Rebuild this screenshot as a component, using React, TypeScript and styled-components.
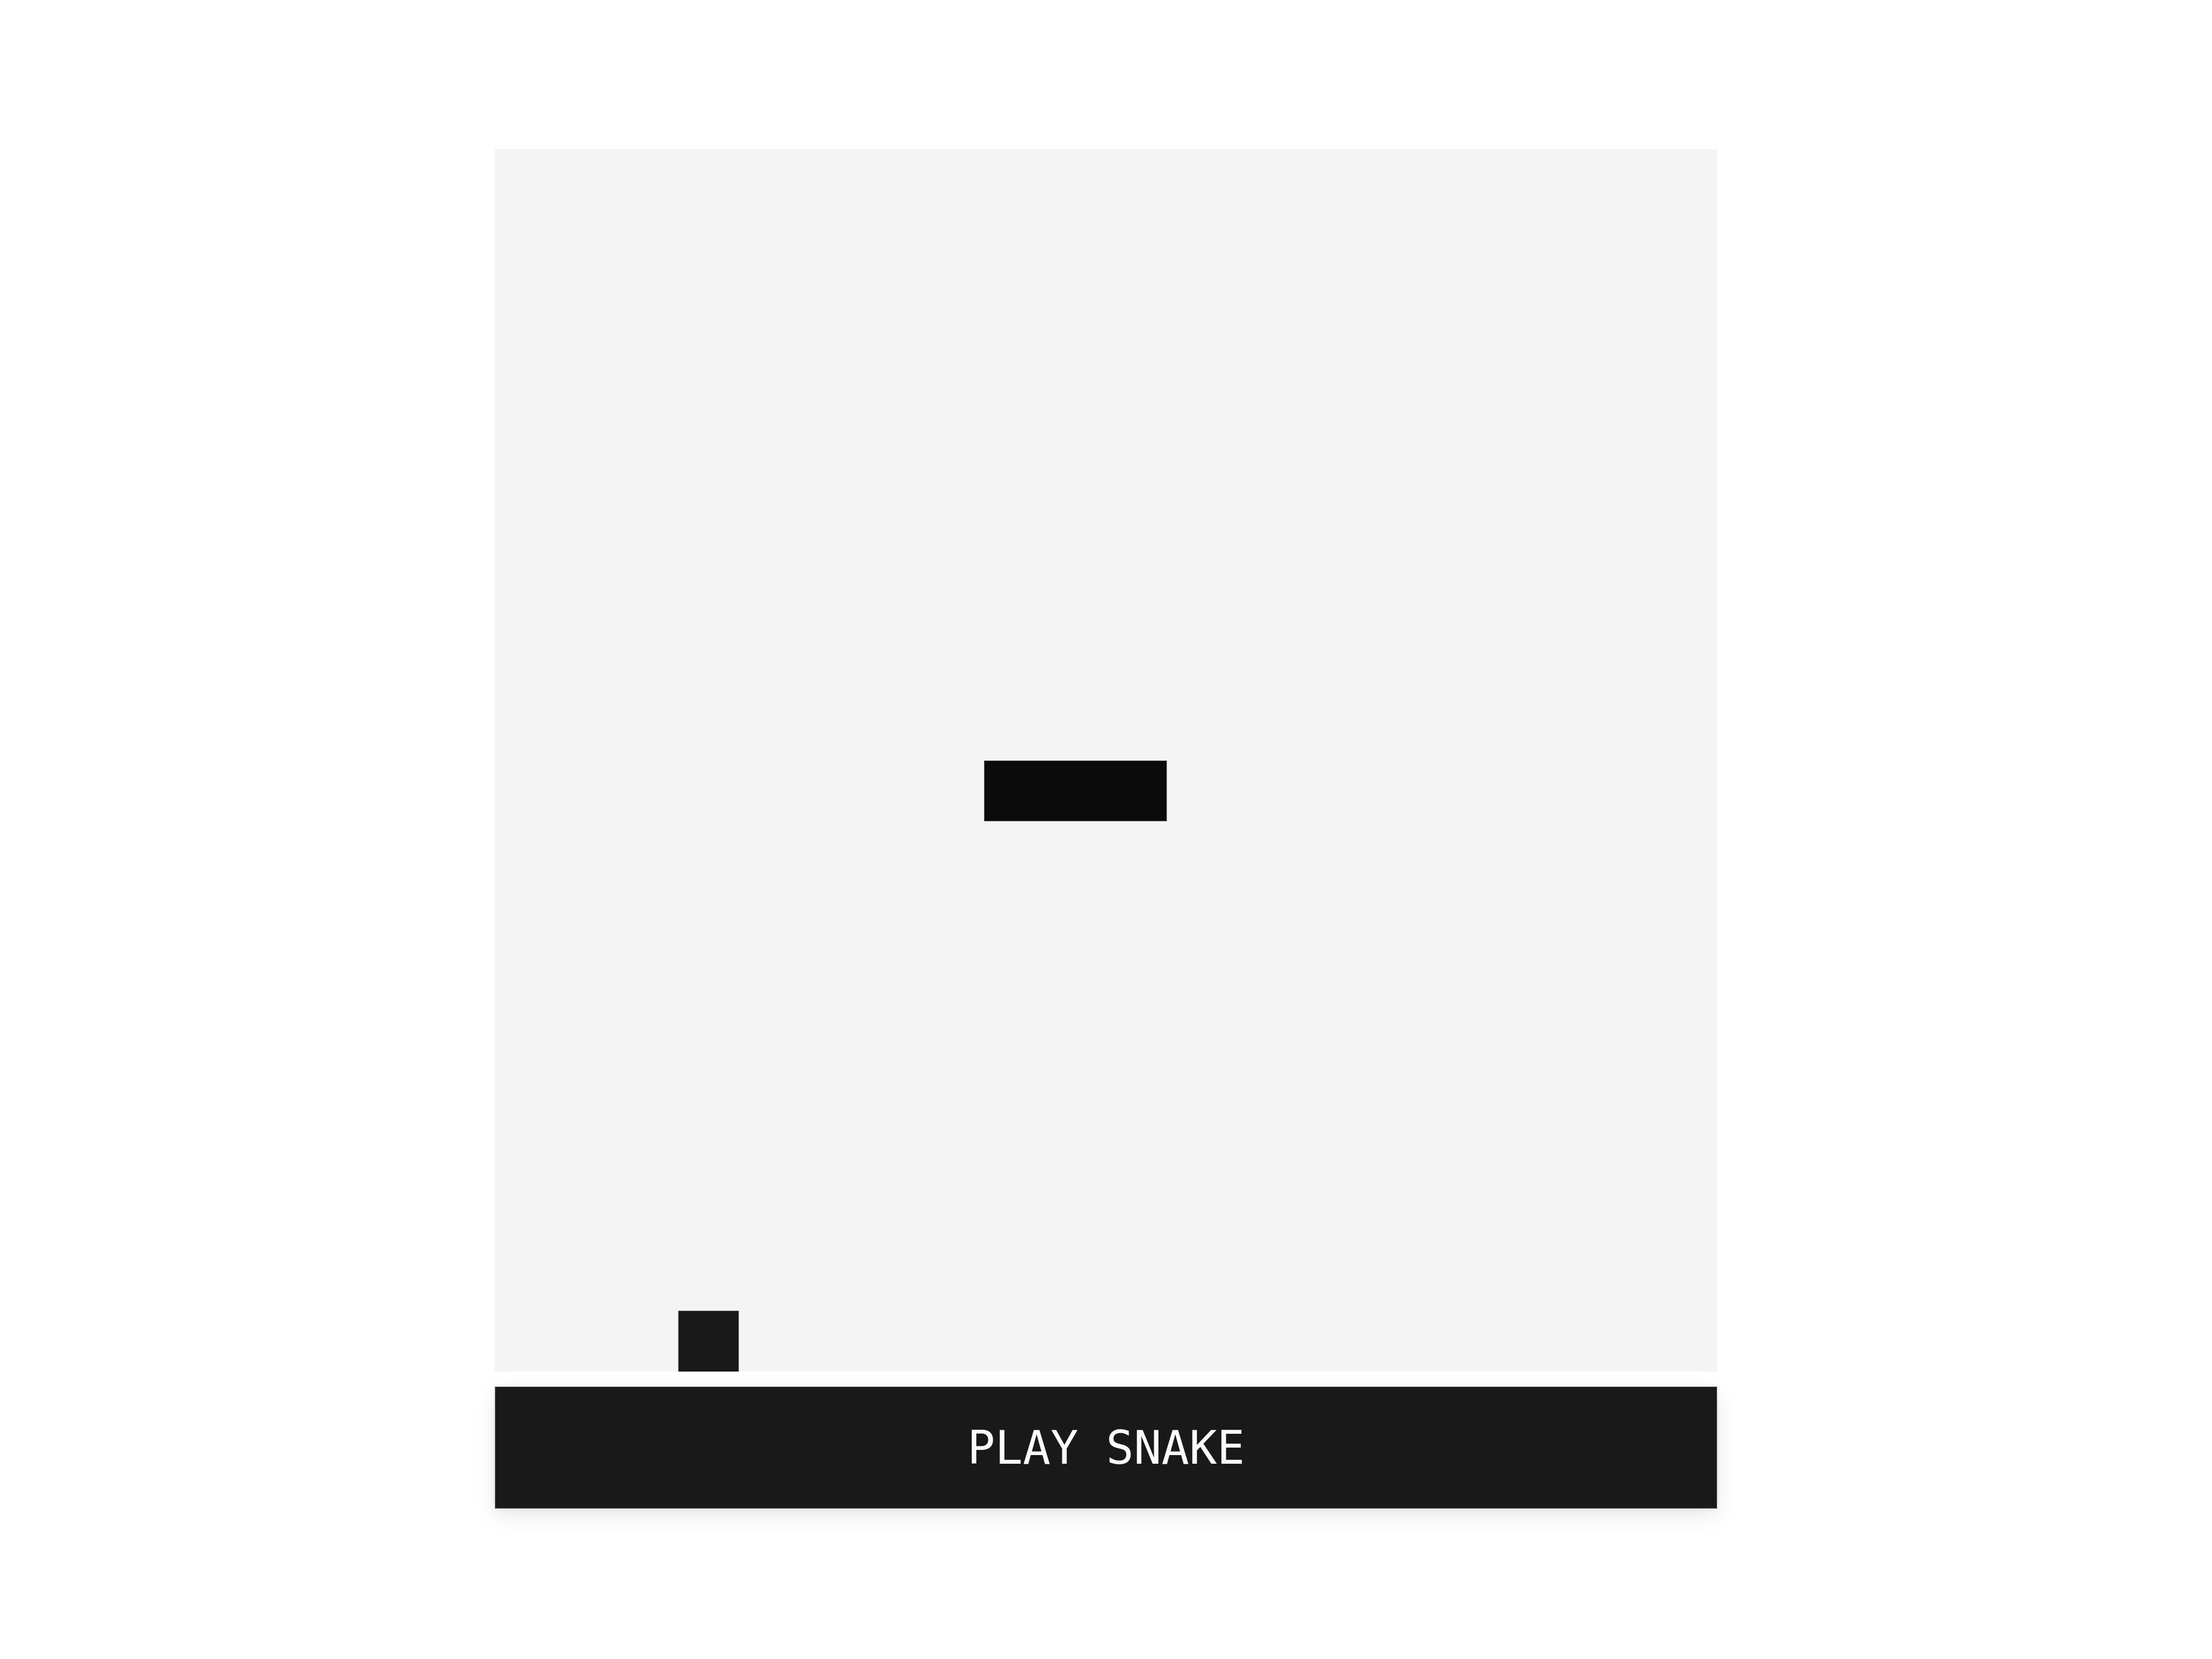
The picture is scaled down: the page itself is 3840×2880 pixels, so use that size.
import React from "react";
import styled, { createGlobalStyle } from "styled-components";

const CELL = 106.1;
const GRID = 20;
const SIZE = 2122;

const GlobalStyle = createGlobalStyle`
  html, body {
    margin: 0;
    padding: 0;
    background: #ffffff;
  }
  body {
    font-family: "DejaVu Sans Mono", "Liberation Mono", monospace;
  }
`;

const Page = styled.main`
  display: flex;
  flex-direction: column;
  align-items: center;
  padding-top: 259px;
  gap: 26px;
  min-height: 2880px;
  box-sizing: border-box;
`;

const Board = styled.div`
  display: grid;
  grid-template-columns: repeat(${GRID}, ${CELL}px);
  grid-template-rows: repeat(${GRID}, ${CELL}px);
  width: ${SIZE}px;
  height: ${SIZE}px;
  background: #f4f4f4;
`;

type Edges = { $top: boolean; $right: boolean; $bottom: boolean; $left: boolean };

const edge = (on: boolean, color: string) => (on ? `1px solid ${color}` : "none");

const Segment = styled.div<Edges>`
  background: #0b0b0b;
  box-sizing: border-box;
  border-top: ${(p) => edge(p.$top, "#8e8e8e")};
  border-right: ${(p) => edge(p.$right, "#8e8e8e")};
  border-bottom: ${(p) => edge(p.$bottom, "#8e8e8e")};
  border-left: ${(p) => edge(p.$left, "#8e8e8e")};
`;

const Food = styled.div`
  background: #191919;
  box-sizing: border-box;
  border: 1px solid #9a9a9a;
  border-bottom: none;
`;

const PlayButton = styled.button`
  width: ${SIZE}px;
  height: 212px;
  margin: 0;
  padding: 0;
  box-sizing: border-box;
  border: 1px solid #6f6f6f;
  border-radius: 0;
  background: #191919;
  color: #fafafa;
  font-family: "DejaVu Sans Mono", "Liberation Mono", monospace;
  font-size: 80px;
  letter-spacing: 0;
  box-shadow: 0 12px 36px rgba(0, 0, 0, 0.09), 0 2px 10px rgba(0, 0, 0, 0.05);
  cursor: pointer;
  display: flex;
  align-items: center;
  justify-content: center;
`;

type Point = { x: number; y: number };

const snake: Point[] = [
  { x: 10, y: 10 },
  { x: 9, y: 10 },
  { x: 8, y: 10 },
];

const food: Point = { x: 3, y: 19 };

const has = (x: number, y: number) => snake.some((s) => s.x === x && s.y === y);

export default function App() {
  return (
    <>
      <GlobalStyle />
      <Page>
        <Board>
          {snake.map((s, i) => (
            <Segment
              key={i}
              style={{ gridColumn: s.x + 1, gridRow: s.y + 1 }}
              $top={!has(s.x, s.y - 1)}
              $right={!has(s.x + 1, s.y)}
              $bottom={!has(s.x, s.y + 1)}
              $left={!has(s.x - 1, s.y)}
            />
          ))}
          <Food style={{ gridColumn: food.x + 1, gridRow: food.y + 1 }} />
        </Board>
        <PlayButton type="button">PLAY SNAKE</PlayButton>
      </Page>
    </>
  );
}
